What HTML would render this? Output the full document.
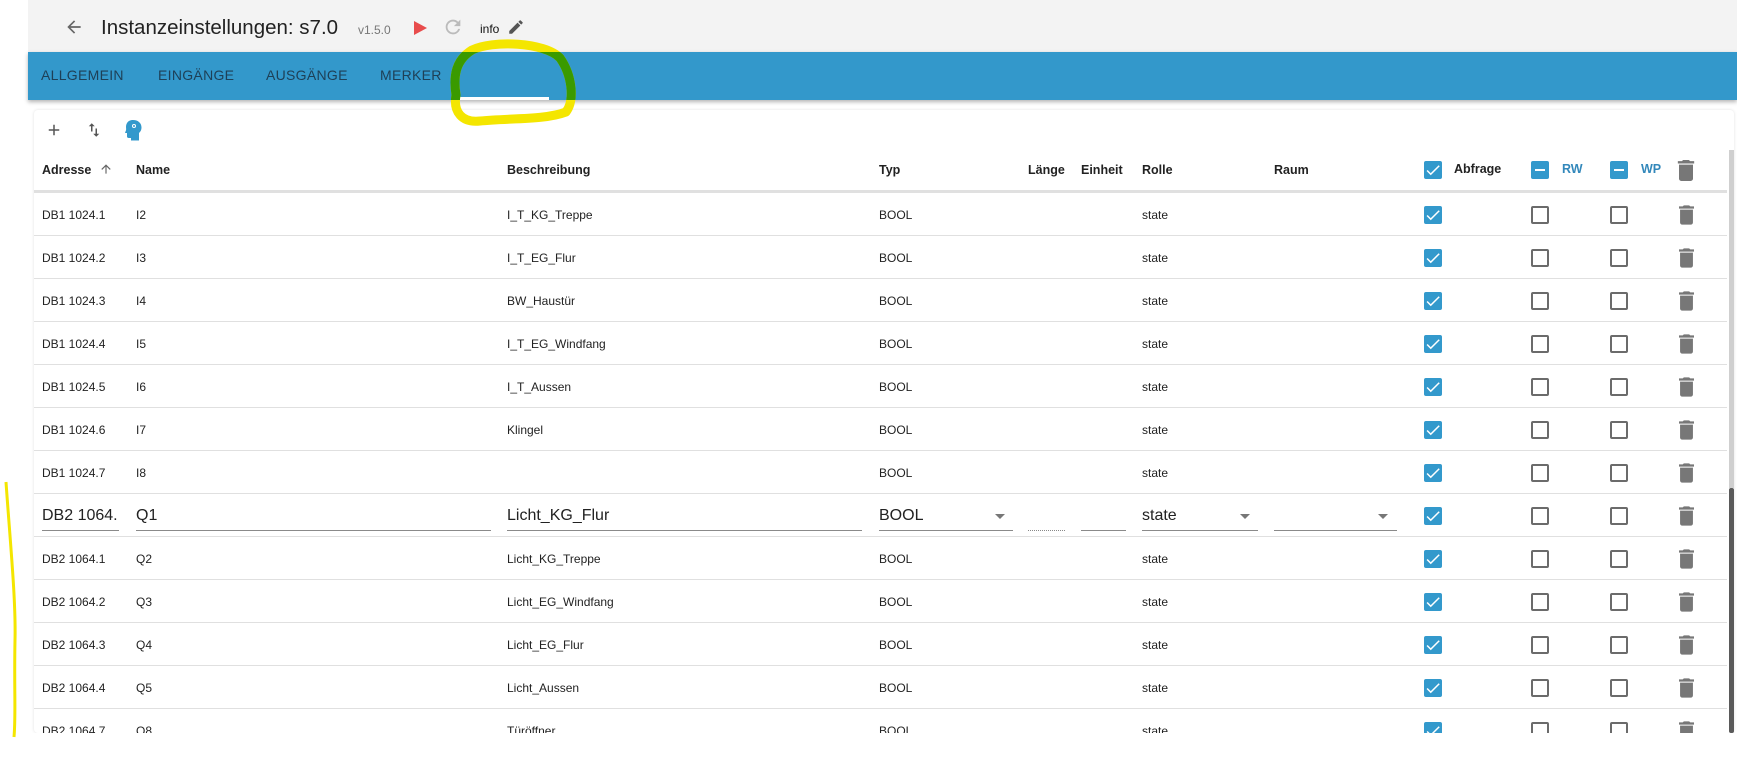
<!DOCTYPE html>
<html><head><meta charset="utf-8"><style>
*{margin:0;padding:0;box-sizing:border-box}
body{width:1737px;height:768px;overflow:hidden;background:#fff;font-family:"Liberation Sans",Arial,sans-serif;position:relative;color:#222}
.a{position:absolute}
#hdr{left:28px;top:0;width:1709px;height:52px;background:#f3f3f3}
#bar{left:28px;top:52px;width:1709px;height:48px;background:#3398cb;box-shadow:0 2px 4px rgba(0,0,0,.3)}
.tab{position:absolute;top:15px;font-size:14px;color:#1e4057;letter-spacing:.3px}
#card{left:34px;top:110px;width:1700px;height:623px;background:#fff;border-radius:4px;box-shadow:0 0 3px rgba(0,0,0,.12)}
.hd{position:absolute;top:163px;font-size:12.5px;font-weight:bold;color:#222}
.row{position:absolute;left:34px;width:1693px;height:43px;border-bottom:1px solid #e0e0e0}
.row span{position:absolute;top:15px;font-size:12px;color:#222}
.cb{position:absolute;width:18px;height:18px;border-radius:2px}
.on{background:#3399cc}
.off{border:2px solid #6b6b6b}
.in{position:absolute;top:9px;height:28px;border-bottom:1px solid #8a8a8a;font-size:16px;padding-top:4px;color:#222}
.arr{position:absolute;width:0;height:0;border-left:5px solid transparent;border-right:5px solid transparent;border-top:5px solid #777;top:20px}
</style></head><body>
<div class="a" id="hdr"></div>
<svg class="a" style="left:64px;top:17px" width="20" height="20" viewBox="0 0 24 24"><path d="M20 11H7.83l5.59-5.59L12 4l-8 8 8 8 1.41-1.41L7.83 13H20v-2z" fill="#666"/></svg>
<div class="a" style="left:101px;top:16px;font-size:20.5px;color:#222">Instanzeinstellungen: s7.0</div>
<div class="a" style="left:358px;top:23px;font-size:12px;color:#777">v1.5.0</div>
<svg class="a" style="left:414px;top:21px" width="13" height="14"><path d="M0 0L13 7L0 14Z" fill="#e84c4c"/></svg>
<svg class="a" style="left:442px;top:16px" width="22" height="22" viewBox="0 0 24 24"><path d="M17.65 6.35A7.958 7.958 0 0 0 12 4c-4.42 0-7.99 3.58-7.99 8s3.57 8 7.99 8c3.73 0 6.84-2.55 7.73-6h-2.08A5.99 5.99 0 0 1 12 18c-3.31 0-6-2.69-6-6s2.69-6 6-6c1.66 0 3.14.69 4.22 1.78L13 11h7V4l-2.35 2.35z" fill="#bbb"/></svg>
<div class="a" style="left:480px;top:22px;font-size:12px;color:#111">info</div>
<svg class="a" style="left:507px;top:18px" width="18" height="18" viewBox="0 0 24 24"><path d="M3 17.25V21h3.75L17.81 9.94l-3.75-3.75L3 17.25zM20.71 7.04a1 1 0 0 0 0-1.41l-2.34-2.34a1 1 0 0 0-1.41 0l-1.83 1.83 3.75 3.75 1.83-1.83z" fill="#555"/></svg>
<div class="a" id="bar">
<div class="tab" style="left:13px">ALLGEMEIN</div>
<div class="tab" style="left:130px">EINGÄNGE</div>
<div class="tab" style="left:238px">AUSGÄNGE</div>
<div class="tab" style="left:352px">MERKER</div>
<div style="position:absolute;left:431px;top:45px;width:90px;height:3px;background:#fff"></div>
</div>
<div class="a" id="card"></div>
<svg class="a" style="left:45px;top:121px" width="18" height="18" viewBox="0 0 24 24"><path d="M19 13h-6v6h-2v-6H5v-2h6V5h2v6h6v2z" fill="#555"/></svg>
<svg class="a" style="left:85px;top:120px" width="18" height="20" viewBox="0 0 24 24"><path d="M16 17.01V10h-2v7.01h-3L15 21l4-3.99h-3zM9 3L5 6.99h3V14h2V6.99h3L9 3z" fill="#555"/></svg>
<svg class="a" style="left:124px;top:119px" width="18" height="22" viewBox="0 0 18 22"><path d="M9 1C4 1 2 4.5 2 8c0 1.5.5 2.5-.5 4.5L1 14h2v3.5c0 1 .8 1.5 1.8 1.5H7v2.5h8V14c1.8-1.5 2.5-3.5 2.5-5.5C17.5 4 14 1 9 1z" fill="#3399cc"/><circle cx="10" cy="7" r="2" fill="#fff"/><circle cx="10" cy="7" r="1" fill="#3399cc"/></svg>
<div class="hd" style="left:42px">Adresse</div>
<svg class="a" style="left:99px;top:162px" width="14" height="14" viewBox="0 0 24 24"><path d="M4 12l1.41 1.41L11 7.83V20h2V7.83l5.58 5.59L20 12l-8-8-8 8z" fill="#666"/></svg>
<div class="hd" style="left:136px">Name</div>
<div class="hd" style="left:507px">Beschreibung</div>
<div class="hd" style="left:879px">Typ</div>
<div class="hd" style="left:1028px">Länge</div>
<div class="hd" style="left:1081px">Einheit</div>
<div class="hd" style="left:1142px">Rolle</div>
<div class="hd" style="left:1274px">Raum</div>
<div class="cb on" style="left:1424px;top:161px"><svg width="18" height="18" viewBox="0 0 24 24"><path d="M9 16.17L4.83 12l-1.42 1.41L9 19 21 7l-1.41-1.41z" fill="#fff"/></svg></div>
<div class="hd" style="left:1454px;top:162px">Abfrage</div>
<div class="cb on" style="left:1531px;top:161px"><div style="position:absolute;left:4px;top:8px;width:10px;height:2px;background:#fff"></div></div>
<div class="hd" style="left:1562px;top:162px;color:#3388bb">RW</div>
<div class="cb on" style="left:1610px;top:161px"><div style="position:absolute;left:4px;top:8px;width:10px;height:2px;background:#fff"></div></div>
<div class="hd" style="left:1641px;top:162px;color:#3388bb">WP</div>
<svg class="a" style="left:1677px;top:160px" width="18" height="21" viewBox="5 3 14 18"><path d="M6 19c0 1.1.9 2 2 2h8c1.1 0 2-.9 2-2V7H6v12zM19 4h-3.5l-1-1h-5l-1 1H5v2h14V4z" fill="#777"/></svg>
<div class="a" style="left:34px;top:190px;width:1693px;height:3px;background:#e0e0e0"></div>

<div class="row" style="top:193px"><span style="left:8px">DB1 1024.1</span><span style="left:102px">I2</span><span style="left:473px">I_T_KG_Treppe</span><span style="left:845px">BOOL</span><span style="left:1108px">state</span></div>
<div class="row" style="top:236px"><span style="left:8px">DB1 1024.2</span><span style="left:102px">I3</span><span style="left:473px">I_T_EG_Flur</span><span style="left:845px">BOOL</span><span style="left:1108px">state</span></div>
<div class="row" style="top:279px"><span style="left:8px">DB1 1024.3</span><span style="left:102px">I4</span><span style="left:473px">BW_Haustür</span><span style="left:845px">BOOL</span><span style="left:1108px">state</span></div>
<div class="row" style="top:322px"><span style="left:8px">DB1 1024.4</span><span style="left:102px">I5</span><span style="left:473px">I_T_EG_Windfang</span><span style="left:845px">BOOL</span><span style="left:1108px">state</span></div>
<div class="row" style="top:365px"><span style="left:8px">DB1 1024.5</span><span style="left:102px">I6</span><span style="left:473px">I_T_Aussen</span><span style="left:845px">BOOL</span><span style="left:1108px">state</span></div>
<div class="row" style="top:408px"><span style="left:8px">DB1 1024.6</span><span style="left:102px">I7</span><span style="left:473px">Klingel</span><span style="left:845px">BOOL</span><span style="left:1108px">state</span></div>
<div class="row" style="top:451px"><span style="left:8px">DB1 1024.7</span><span style="left:102px">I8</span><span style="left:845px">BOOL</span><span style="left:1108px">state</span></div>
<div class="row" style="top:494px">
<div class="in" style="left:8px;width:77px">DB2 1064.</div>
<div class="in" style="left:102px;width:355px">Q1</div>
<div class="in" style="left:473px;width:355px">Licht_KG_Flur</div>
<div class="in" style="left:845px;width:134px">BOOL</div><div class="arr" style="left:961px"></div>
<div class="in" style="left:994px;width:37px;border-bottom:1px dotted #888"></div>
<div class="in" style="left:1047px;width:45px"></div>
<div class="in" style="left:1108px;width:116px">state</div><div class="arr" style="left:1206px"></div>
<div class="in" style="left:1240px;width:123px"></div><div class="arr" style="left:1344px"></div>
</div>
<div class="row" style="top:537px"><span style="left:8px">DB2 1064.1</span><span style="left:102px">Q2</span><span style="left:473px">Licht_KG_Treppe</span><span style="left:845px">BOOL</span><span style="left:1108px">state</span></div>
<div class="row" style="top:580px"><span style="left:8px">DB2 1064.2</span><span style="left:102px">Q3</span><span style="left:473px">Licht_EG_Windfang</span><span style="left:845px">BOOL</span><span style="left:1108px">state</span></div>
<div class="row" style="top:623px"><span style="left:8px">DB2 1064.3</span><span style="left:102px">Q4</span><span style="left:473px">Licht_EG_Flur</span><span style="left:845px">BOOL</span><span style="left:1108px">state</span></div>
<div class="row" style="top:666px"><span style="left:8px">DB2 1064.4</span><span style="left:102px">Q5</span><span style="left:473px">Licht_Aussen</span><span style="left:845px">BOOL</span><span style="left:1108px">state</span></div>
<div class="row" style="top:709px;border:none"><span style="left:8px">DB2 1064.7</span><span style="left:102px">Q8</span><span style="left:473px">Türöffner</span><span style="left:845px">BOOL</span><span style="left:1108px">state</span></div>

<div id="ctl"></div>
<div class="a" style="left:0;top:733px;width:1737px;height:35px;background:#fff"></div>
<div class="a" style="left:1729px;top:150px;width:5px;height:338px;background:#cfcfcf"></div>
<div class="a" style="left:1729px;top:488px;width:5px;height:245px;background:#5a5a5a;border-radius:2px"></div>
<svg class="a" style="left:0;top:0" width="1737" height="768">
<defs><clipPath id="cb"><rect x="0" y="52" width="1737" height="48"/></clipPath></defs>
<path d="M472 50 C492 40 545 42 560 58 C572 75 575 100 566 112 C545 120 510 118 480 121 C462 123 453 112 456 95 C453 75 456 60 472 50Z" fill="none" stroke="#f4e600" stroke-width="9" stroke-linejoin="round"/>
<path d="M472 50 C492 40 545 42 560 58 C572 75 575 100 566 112 C545 120 510 118 480 121 C462 123 453 112 456 95 C453 75 456 60 472 50Z" fill="none" stroke="#3a9a00" stroke-width="9" clip-path="url(#cb)"/>
<path d="M6 482 C10 540 16 600 15 640 C14 690 16 715 14 737" fill="none" stroke="#f4e600" stroke-width="3"/>
</svg>
<script>
var c=document.getElementById('ctl'),h='';
for(var i=0;i<13;i++){var y=193+43*i+13;
h+='<div class="cb on" style="left:1424px;top:'+y+'px"><svg width="18" height="18" viewBox="0 0 24 24"><path d="M9 16.17L4.83 12l-1.42 1.41L9 19 21 7l-1.41-1.41z" fill="#fff"/></svg></div>';
h+='<div class="cb off" style="left:1531px;top:'+y+'px"></div><div class="cb off" style="left:1610px;top:'+y+'px"></div>';
h+='<svg class="a" style="left:1679px;top:'+(y-1)+'px" width="15" height="20" viewBox="5 3 14 18"><path d="M6 19c0 1.1.9 2 2 2h8c1.1 0 2-.9 2-2V7H6v12zM19 4h-3.5l-1-1h-5l-1 1H5v2h14V4z" fill="#777"/></svg>';}
c.innerHTML=h;
</script>
</body></html>
